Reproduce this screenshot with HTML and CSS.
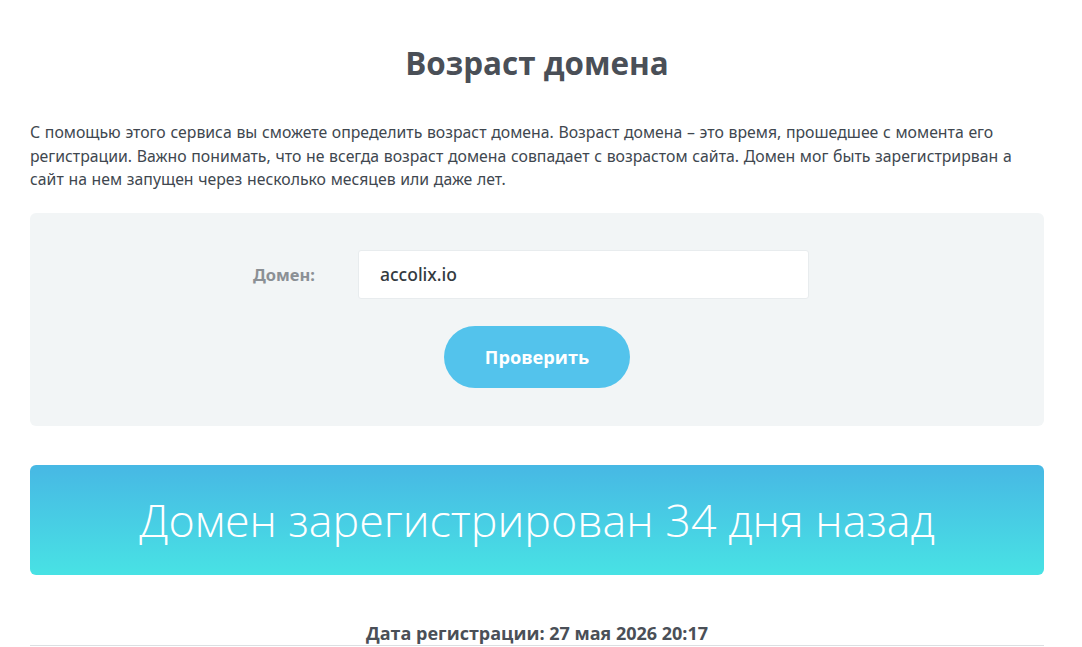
FILE: index.html
```html
<!DOCTYPE html>
<html lang="ru">
<head>
<meta charset="utf-8">
<title>Возраст домена</title>
<link rel="stylesheet" href="styles.css">
</head>
<body>
<main class="page">
  <h1 class="title">Возраст домена</h1>
  <p class="intro">С помощью этого сервиса вы сможете определить возраст домена. Возраст домена – это время, прошедшее с момента его регистрации. Важно понимать, что не всегда возраст домена совпадает с возрастом сайта. Домен мог быть зарегистрирван а сайт на нем запущен через несколько месяцев или даже лет.</p>
  <form class="check-box">
    <div class="field-row">
      <label class="field-label" for="domain">Домен:</label>
      <input class="field-input" id="domain" type="text" value="accolix.io">
    </div>
    <button class="check-btn" type="button">Проверить</button>
  </form>
  <div class="result">Домен зарегистрирован 34 дня назад</div>
  <div class="reg-date">Дата регистрации: 27 мая 2026 20:17</div>
</main>
</body>
</html>
```

FILE: styles.css
```css
* { box-sizing: border-box; }
html, body { margin: 0; padding: 0; background: #fff; }
body {
  font-family: "Noto Sans", "Open Sans", sans-serif;
  color: #424a52;
}
.page {
  width: 1014px;
  margin: 0 0 0 30px;
  padding-top: 44px;
}
.title {
  margin: 0;
  text-align: center;
  font-family: "Open Sans", sans-serif;
  font-weight: 700;
  font-size: 31.4px;
  line-height: 38px;
  color: #4a4f57;
}
.intro {
  margin: 39px 0 0;
  font-size: 15.8px;
  line-height: 23.5px;
  word-spacing: 0.6px;
  color: #40474f;
}
.check-box {
  margin-top: 21px;
  background: #f2f5f6;
  border-radius: 6px;
  height: 213px;
  padding-top: 37px;
  display: flex;
  flex-direction: column;
  align-items: center;
}
.field-row {
  display: flex;
  align-items: center;
  margin-right: 12px;
}
.field-label {
  width: 105px;
  font-size: 16.5px;
  font-weight: 700;
  color: #8b9095;
}
.field-input {
  width: 451px;
  height: 49px;
  border: 1px solid #e8ecee;
  border-radius: 3px;
  background: #fff;
  padding: 0 21px;
  font-family: "Noto Sans", sans-serif;
  font-size: 17.5px;
  font-weight: 500;
  color: #333a40;
  outline: none;
}
.check-btn {
  margin-top: 27px;
  width: 186px;
  height: 62px;
  border: 0;
  border-radius: 31px;
  background: #53c3ec;
  color: #fff;
  font-family: "Open Sans", sans-serif;
  font-weight: 700;
  font-size: 18.2px;
}
.result {
  margin-top: 39px;
  height: 110px;
  border-radius: 6px;
  background: linear-gradient(to bottom, #47b8e4, #48e2e4);
  display: flex;
  align-items: center;
  justify-content: center;
  color: #fff;
  font-family: "Open Sans", sans-serif;
  font-weight: 300;
  font-size: 44.8px;
}
.reg-date {
  margin-top: 47px;
  padding-bottom: 1px;
  border-bottom: 1px solid #dcdfe2;
  text-align: center;
  font-family: "Open Sans", sans-serif;
  font-weight: 700;
  font-size: 18px;
  line-height: 22px;
  color: #4a4f57;
}
```
